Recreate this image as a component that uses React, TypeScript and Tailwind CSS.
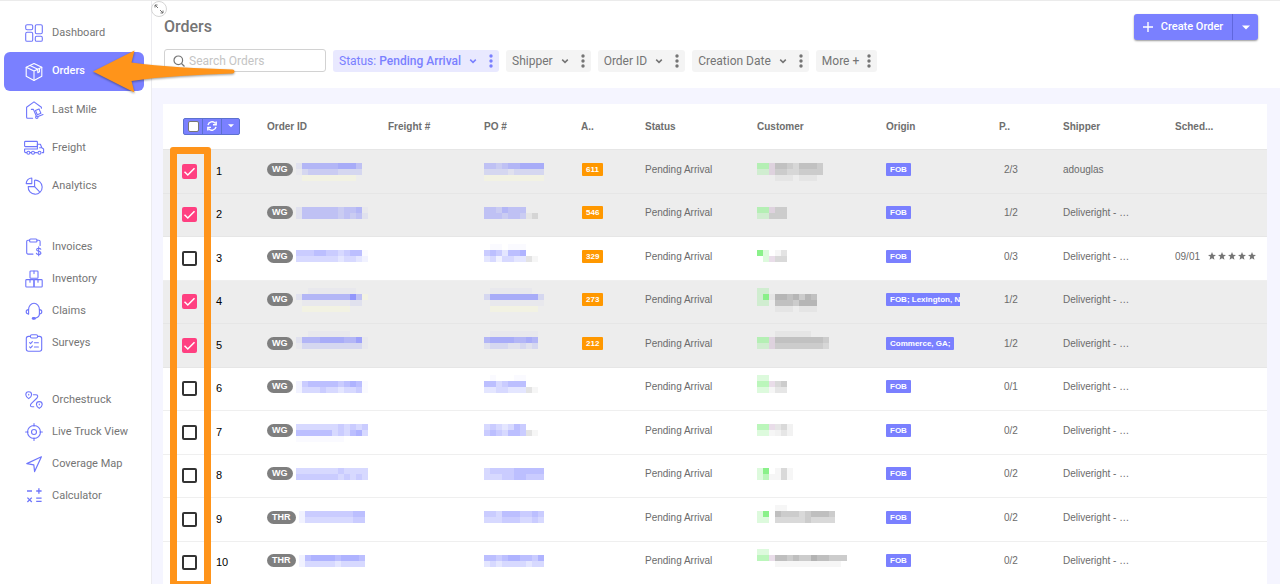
import React from "react";

const svgProps = {
  width: 18,
  height: 18,
  viewBox: "0 0 18 18",
  fill: "none",
  stroke: "currentColor",
  strokeWidth: 1.1,
  strokeLinecap: "round" as const,
  strokeLinejoin: "round" as const,
  overflow: "visible",
  "aria-hidden": true,
};

const icons: Record<string, React.ReactNode> = {
  Dashboard: (
    <>
      <rect x="0.7" y="0.7" width="7" height="5" rx="1.4" />
      <rect x="10.3" y="0.7" width="7" height="9" rx="1.4" />
      <rect x="0.7" y="8.3" width="7" height="9" rx="1.4" />
      <rect x="10.3" y="12.3" width="7" height="5" rx="1.4" />
    </>
  ),
  Orders: (
    <>
      <path d="M9 0.6 16.8 4.2v9L9 17.4 1.2 13.2v-9Z" />
      <path d="M1.2 4.2 9 8l7.8-3.8M9 8v9.4M5 2.6l7.8 3.7v3.4l1.7-1V5.4" />
    </>
  ),
  "Last Mile": (
    <>
      <path d="M7.6 17.2H2.6a1 1 0 0 1-1-1V6.2L9 .9l7.4 5.3v1" />
      <path d="M6.400 8.400h2l3 6.800M13 15.600l5-2" />
      <path d="m10.400 9.400 3.600-1.500 1.900 4.300-3.600 1.500Z" />
      <circle cx="11.800" cy="16.200" r="1.200" />
    </>
  ),
  Freight: (
    <>
      <rect x="-.4" y="2.400" width="12.800" height="5.200" rx=".8" />
      <path d="M-.4 10h12.400M-.4 10v2.600a1 1 0 0 0 1 1h1M12.400 5.200h3l1.400 3.600 1.800 1.200v3.600h-1.400M12.400 5.200V10M14.600 8.800h2.200M5.200 13.600h1.200M9.600 13.600h2.800" />
      <circle cx="3.400" cy="13.800" r="1.500" />
      <circle cx="8" cy="13.800" r="1.500" />
      <circle cx="14.500" cy="13.800" r="1.500" />
    </>
  ),
  Analytics: (
    <>
      <path d="M6.800 1v5.600H1.200A5.600 5.600 0 0 1 6.800 1Z" />
      <path d="M9.600 3.200a7 7 0 1 1-6.400 6.400h6.400Z" />
      <path d="m9.600 9.600 4.800 5" />
    </>
  ),
  Invoices: (
    <>
      <path d="M4.6 2.2H3a1.3 1.3 0 0 0-1.3 1.3v11.3A1.3 1.3 0 0 0 3 16.1h5M12 2.2h1.8a1.3 1.3 0 0 1 1.3 1.3v4" />
      <rect x="4.6" y="1" width="7.4" height="3" rx="1" />
      <path d="M15.8 11.2c-.4-.8-1.2-1-2.2-1-1.200 0-2 .5-2 1.500 0 2.200 4.300 1 4.300 3.200 0 1-1 1.500-2.200 1.500-1.200 0-2-.4-2.300-1.200M13.700 8.700v9" />
    </>
  ),
  Inventory: (
    <>
      <rect x="5" y="1" width="8" height="7.300" rx=".8" />
      <rect x=".8" y="9.600" width="8.200" height="7.400" rx=".8" />
      <rect x="9" y="9.600" width="8.200" height="7.400" rx=".8" />
      <path d="M9 1v2.600M5 9.600v2.600M13 9.600v2.600" />
    </>
  ),
  Claims: (
    <>
      <path d="M3.600 12V7.400a5.400 6.200 0 0 1 10.800 0V12c0 2-1.800 3.600-4.200 4.200" />
      <path d="M3.600 7.600C2 7.600 1.200 8.600 1.200 9.700S2 11.900 3.600 12M14.400 7.600c1.600 0 2.400 1 2.400 2.100s-.8 2.200-2.400 2.300" />
      <ellipse cx="8.800" cy="16.400" rx="1.600" ry=".8" fill="currentColor" />
    </>
  ),
  Surveys: (
    <>
      <rect x="1.300" y="2.400" width="15.400" height="14.800" rx="2.200" />
      <rect x="5.400" y=".8" width="7.200" height="3.200" rx="1.400" fill="white" />
      <path d="m4.600 8.600 1 1 1.800-2M9.400 8.800h4M4.600 12.800l1 1 1.800-2M9.400 13h4" />
    </>
  ),
  Orchestruck: (
    <>
      <path d="M3.700 7.600C2 6.400.8 5.200.8 3.700a2.900 2.900 0 0 1 5.800 0c0 1.500-1.200 2.700-2.900 3.900Z" />
      <path d="M14.300 17.400c-1.700-1.200-2.900-2.400-2.900-3.900a2.900 2.900 0 0 1 5.800 0c0 1.500-1.200 2.700-2.900 3.900Z" />
      <path d="M3.700 3.200v.8M14.300 13v.8M8.400 3.800h2.400c2.200 0 2.400 1.800 1.200 3.200l-5.800 5.600c-1.400 1.600-.8 3.200 1 3.200h1.600" />
    </>
  ),
  "Live Truck View": (
    <>
      <circle cx="9" cy="9" r="6.500" />
      <circle cx="9" cy="9" r="2.500" />
      <path d="M9 .6v2.600M9 14.800v2.600M.6 9h2.600M14.800 9h2.600" />
    </>
  ),
  "Coverage Map": <path d="M16.400 1.800 1.800 8.600l7 1.200.8 6.800Z" strokeWidth="1.200" />,
  Calculator: (
    <path d="M2 4h5M11.200 4h5.400M13.900 1.300v5.400M2.400 10.600l4.400 4.400M6.800 10.600 2.400 15M11.200 11.200h5.400M11.200 14.400h5.400" strokeWidth="1.300" strokeLinecap="butt" />
  ),
};

const groups = [
  { names: ["Dashboard", "Orders", "Last Mile", "Freight", "Analytics"], row: "h-[38px]" },
  { names: ["Invoices", "Inventory", "Claims", "Surveys"], row: "h-8" },
  { names: ["Orchestruck", "Live Truck View", "Coverage Map", "Calculator"], row: "h-8" },
];

function Sidebar() {
  return (
    <nav className="flex w-[152px] shrink-0 flex-col gap-[25px] border-r border-[#ececf0] bg-white pt-[13px] pr-[7px] pl-1">
      {groups.map((g) => (
        <ul key={g.names[0]} className="first:pb-px">
          {g.names.map((n) => (
            <li key={n}>
              <a
                href="#"
                className={`flex items-center gap-[9px] pl-[21px] text-[11px] ${
                  n === "Orders"
                    ? "h-[39px] rounded-md bg-[#7a80ff] font-medium text-white"
                    : `${g.row} text-[#757575]`
                }`}
              >
                <svg {...svgProps} className={n === "Orders" ? "shrink-0" : "shrink-0 text-[#6f76fb]"}>
                  {icons[n]}
                </svg>
                {n}
              </a>
            </li>
          ))}
        </ul>
      ))}
    </nav>
  );
}

function Chevron() {
  return (
    <svg width="8" height="8" viewBox="0 0 8 8" fill="none" stroke="currentColor" strokeWidth="1.500" aria-hidden="true">
      <path d="M1.200 2.600 4 5.400l2.800-2.800" />
    </svg>
  );
}

function Dots() {
  return (
    <svg width="4" height="14" viewBox="0 0 4 14" fill="currentColor" aria-hidden="true">
      <circle cx="2" cy="2" r="1.700" />
      <circle cx="2" cy="7" r="1.700" />
      <circle cx="2" cy="12" r="1.700" />
    </svg>
  );
}

function Caret() {
  return (
    <svg width="8" height="5" viewBox="0 0 8 5" fill="currentColor" aria-hidden="true">
      <path d="M0 .5h8l-4 4Z" />
    </svg>
  );
}

function Filter({ label, value, chevron = true }: { label: string; value?: string; chevron?: boolean }) {
  return (
    <div
      className={`flex h-[22px] items-center rounded-[3px] px-1.5 ${
        value ? "bg-[#e9e9ff] text-[#7a80ff]" : "bg-[#f4f4f4] text-[#757575]"
      }`}
    >
      <button type="button" className="flex items-center gap-2 text-xs">
        <span>
          {label}
          {value && <span className="font-medium"> {value}</span>}
        </span>
        {chevron && <Chevron />}
      </button>
      <button type="button" aria-label={`${label} options`} className={chevron ? "ml-3" : "ml-2"}>
        <Dots />
      </button>
    </div>
  );
}

/* Censored value: one character per 6px cell. Digits are strengths of the base tint. */
function Mosaic({ rows, base }: { rows: string[]; base: string }) {
  const w = Math.max(...rows.map((r) => r.length)) * 6;
  const h = rows.length * 6;
  return (
    <svg width={w} height={h} shapeRendering="crispEdges" className="shrink-0" aria-hidden="true">
      {rows.flatMap((r, y) =>
        [...r].map((c, x) => {
          if (c === " " || c === "0") return null;
          const tint: Record<string, [string, number]> = {
            g: ["#8df08d", 0.3],
            G: ["#8df08d", 0.6],
            H: ["#7df07d", 0.9],
            p: ["#c9a9c9", 0.4],
            k: ["#909090", 0.25],
            j: ["#909090", 0.08],
            f: [base, 0.04],
            y: ["#f5f5dc", 0.6],
          };
          const [fill, op] = tint[c] ?? [base, Number(c) / 10];
          return <rect key={`${x}-${y}`} x={x * 6} y={y * 6} width="6" height="6" fill={fill} fillOpacity={op} />;
        }),
      )}
    </svg>
  );
}

type Order = {
  kind: string;
  id: string[];
  po: string[];
  age?: string;
  who: string[];
  origin: string;
  pieces: string;
  shipper: string;
  sched?: string;
  on?: boolean;
};

const D = "Deliveright - …";
const orders: Order[] = [
  { kind: "WG", id: ["", "15555556664", "f2333332222", "0yyyyyyyyy"], po: ["", "4434556666", "2222122222", "yyyyyyyyyy"], age: "611", who: ["", "GGp44324443", "ggp33223333", "000jjj0jjj"], origin: "FOB", pieces: "2/3", shipper: "adouglas", on: true },
  { kind: "WG", id: ["", "14444443445f", "144444434341", ""], po: ["", "4435444", "4443443jk", ""], age: "546", who: ["", "GGp33", "gg333", ""], origin: "FOB", pieces: "1/2", shipper: D, on: true },
  { kind: "WG", id: ["", "44455443455f", "333333323321", ""], po: ["0ff0fff", "4542556", "2313322kj", ""], age: "329", who: ["", "Hg0jk", "0gp33", ""], origin: "FOB", pieces: "0/3", shipper: D, sched: "09/01" },
  { kind: "WG", id: ["00ffffffff", "15555555584y", "0ffffffff11", "0yyyyyyyy"], po: ["0fffffff", "2666666662", "0fffffffff", "0yyyyyyyy"], age: "273", who: ["gg", "gHj5545354", "gg04443555", "000jjj0jjj"], origin: "FOB; Lexington, NC", pieces: "1/2", shipper: D, on: true },
  { kind: "WG", id: ["00fffffff", "15556666557f", "f2222222222f", ""], po: ["0ffffffff", "566665565", "122211212", ""], age: "212", who: ["000jjjjjj", "GGp444444443", "ggp333333332", ""], origin: "Commerce, GA;", pieces: "1/2", shipper: D, on: true },
  { kind: "WG", id: ["", "14555554565f", "13334332334f", ""], po: ["0f000ff", "5534555", "2233222kj", ""], who: ["gg", "GGp34", "ggj22", ""], origin: "FOB", pieces: "0/1", shipper: D },
  { kind: "WG", id: ["", "333333343434", "555555343563", "ffffffff"], po: ["", "3432354", "4543554kj", ""], who: ["", "GGp231", "ggj121", ""], origin: "FOB", pieces: "0/2", shipper: D },
  { kind: "WG", id: ["", "333333343333", "444444434343", ""], po: ["", "3444455555", "3334455444", ""], who: ["", "gH0j3j", "gGjj3j", ""], origin: "FOB", pieces: "0/2", shipper: D },
  { kind: "THR", id: ["", "14444444455", "13333333344", ""], po: ["", "4435554454", "3334443343", ""], who: ["000jj", "gH05444345554", "gg03333343333", ""], origin: "FOB", pieces: "0/2", shipper: D },
  { kind: "THR", id: ["", "15666656665", "13333323333", ""], po: ["", "5545665546", "2323333233", ""], who: ["gg", "GGp554544655444", "000jjjjjjjjjjj", ""], origin: "FOB", pieces: "0/2", shipper: D },
];

function RowCheckbox({ index, on }: { index: number; on?: boolean }) {
  return (
    <label className="grid size-[15px] place-items-center">
      <input
        type="checkbox"
        defaultChecked={on}
        aria-label={`Select order ${index}`}
        className="peer size-[15px] appearance-none rounded-[2px] border-2 border-[#333] [grid-area:1/1] checked:border-[#ff4081] checked:bg-[#ff4081]"
      />
      <svg
        width="13"
        height="13"
        viewBox="0 0 13 13"
        fill="none"
        stroke="white"
        strokeWidth="1.500"
        className="pointer-events-none hidden [grid-area:1/1] peer-checked:block"
        aria-hidden="true"
      >
        <path d="m1.500 6.800 3.300 3.200 6.700-6.800" />
      </svg>
    </label>
  );
}

function Stars() {
  return (
    <span className="flex gap-0.5" role="img" aria-label="5 stars">
      {[0, 1, 2, 3, 4].map((i) => (
        <svg key={i} width="8" height="8" viewBox="0 0 24 24" fill="#757575" aria-hidden="true">
          <path d="m12 0 3.200 8.400 8.800.5-6.900 5.600 2.300 8.700L12 18.400l-7.400 4.800 2.300-8.700L0 8.900l8.800-.5Z" />
        </svg>
      ))}
    </span>
  );
}

const tag = "inline-block h-[13px] rounded-[1px] px-1 text-[8px] leading-[13px] font-bold whitespace-nowrap text-white";

export default function App() {
  return (
    <div className="flex h-screen overflow-hidden border-t border-[#ebebeb] bg-[#f5f5ff] font-['Roboto',sans-serif]">
      <div className="relative flex">
        <Sidebar />
        <button
          type="button"
          aria-label="Toggle sidebar"
          className="absolute top-0 -right-[15px] z-10 flex size-4 items-center justify-center rounded-full border border-[#d5d5d5] bg-white text-[#666]"
        >
          <svg width="10" height="10" viewBox="0 0 10 10" fill="none" stroke="currentColor" strokeWidth=".9" aria-hidden="true">
            <path d="M1 3.500V1h2.500M1 1l3 3M9 6.500V9H6.500M9 9 6 6" />
          </svg>
        </button>
        <svg
          width="150"
          height="48"
          viewBox="0 0 150 48"
          className="pointer-events-none absolute top-[47px] left-[90px] z-20 drop-shadow-[0_1px_1px_rgba(0,0,0,0.4)]"
          aria-hidden="true"
        >
          <path
            d="M3 23.500 44.500 2.500 41.500 14.500C70 18.500 110 20.500 142.500 21.500a2 2 0 0 1 0 4C110 26.500 70 28.500 41.500 33l3 11.500Z"
            fill="#ff941a"
          />
        </svg>
      </div>

      <main className="flex min-w-0 flex-1 flex-col">
        <header className="flex h-[87px] shrink-0 flex-col bg-white pr-[22px] pl-3">
          <div className="flex h-12 items-start justify-between">
            <h1 className="mt-3.5 text-base leading-6 font-medium text-[#757575]">Orders</h1>
            <div className="mt-[13px] flex h-[26px] rounded-[3px] bg-[#7a80ff] text-white shadow-[0_1px_2px_rgba(0,0,0,0.4)]">
              <button type="button" className="flex w-[98px] items-center justify-center gap-2 text-[11px] font-medium whitespace-nowrap">
                <svg width="10" height="10" viewBox="0 0 10 10" stroke="currentColor" strokeWidth="1.400" aria-hidden="true">
                  <path d="M5 0v10M0 5h10" />
                </svg>
                Create Order
              </button>
              <button
                type="button"
                aria-label="More create options"
                className="flex w-[26px] items-center justify-center border-l border-[#6067dd]"
              >
                <Caret />
              </button>
            </div>
          </div>
          <div className="flex items-center gap-[7px]">
            <label className="flex h-[23px] w-[162px] items-center gap-1 rounded-[3px] border border-[#d2d2d2] pl-2 text-[#757575]">
              <svg width="12" height="12" viewBox="0 0 12 12" fill="none" stroke="currentColor" strokeWidth="1.200" aria-hidden="true">
                <circle cx="5.300" cy="5.300" r="4.300" />
                <path d="m8.500 8.500 3 3" />
              </svg>
              <input
                type="text"
                aria-label="Search Orders"
                placeholder="Search Orders"
                className="min-w-0 flex-1 bg-transparent text-xs outline-none placeholder:text-[#c4c4c4]"
              />
            </label>
            <Filter label="Status:" value="Pending Arrival" />
            <Filter label="Shipper" />
            <Filter label="Order ID" />
            <Filter label="Creation Date" />
            <Filter label="More +" chevron={false} />
          </div>
        </header>

        <section className="relative mt-4 mr-[13px] ml-[11px] shrink-0 bg-white">
          <table className="w-full table-fixed border-collapse text-left font-['Liberation_Sans',Arial,sans-serif] text-[10px] text-[#6b6b6b]">
            <colgroup>
              <col className="w-[53px]" />
              <col className="w-[51px]" />
              <col className="w-[121px]" />
              <col className="w-24" />
              <col className="w-[97px]" />
              <col className="w-16" />
              <col className="w-28" />
              <col className="w-[129px]" />
              <col className="w-[113px]" />
              <col className="w-16" />
              <col className="w-28" />
              <col />
            </colgroup>
            <thead>
              <tr className="h-[45px] border-b border-[#e6e6e6]">
                <th colSpan={2} className="p-0 pl-5">
                  <div className="flex h-[17px] w-[57px] rounded-[2px] border border-[#5c71cf] bg-[#7a80ff] text-white">
                    <label className="flex w-[18px] items-center justify-center">
                      <input
                        type="checkbox"
                        aria-label="Select all orders"
                        className="size-[11px] appearance-none rounded-[2px] border border-[#767676] bg-white"
                      />
                    </label>
                    <button type="button" aria-label="Refresh" className="flex w-[19px] items-center justify-center border-l border-[#5c71cf]">
                      <svg width="10" height="10" viewBox="0 0 12 12" fill="none" stroke="currentColor" strokeWidth="1.700" aria-hidden="true">
                        <path d="M1.200 5A5 5 0 0 1 10 2.800M11 .6v3.800H7.200M10.800 7A5 5 0 0 1 2 9.200M1 11.400V7.600h3.800" />
                      </svg>
                    </button>
                    <button type="button" aria-label="Selection options" className="flex flex-1 items-center justify-center border-l border-[#5c71cf]">
                      <svg width="6" height="4" viewBox="0 0 6 4" fill="currentColor" aria-hidden="true">
                        <path d="M0 .3h6l-3 3Z" />
                      </svg>
                    </button>
                  </div>
                </th>
                {["Order ID", "Freight #", "PO #", "A..", "Status", "Customer", "Origin", "P..", "Shipper", "Sched..."].map((h) => (
                  <th key={h} className="p-0 font-bold text-[#6e6e6e]">
                    {h}
                  </th>
                ))}
              </tr>
            </thead>
            <tbody>
              {orders.map((o, i) => (
                <tr
                  key={i}
                  className={`border-b odd:h-11 even:h-[43px] [&>td]:p-0 ${
                    o.on ? "border-[#e6e6e6] bg-[#ededed]" : "border-[#efefef] bg-white"
                  }`}
                >
                  <td>
                    <div className="pl-[19px]">
                      <RowCheckbox index={i + 1} on={o.on} />
                    </div>
                  </td>
                  <td className="text-[11px] text-black">{i + 1}</td>
                  <td>
                    <div className="flex items-center gap-[3px] pb-1">
                      <span className="h-[13px] shrink-0 rounded-full bg-[#7f7f7f] px-[5px] text-[9px] leading-[13px] font-bold text-white">
                        {o.kind}
                      </span>
                      <Mosaic rows={o.id} base="#7a80ff" />
                    </div>
                  </td>
                  <td />
                  <td>
                    <div className="pb-1">
                      <Mosaic rows={o.po} base="#7a80ff" />
                    </div>
                  </td>
                  <td>
                    <div className="flex pb-1 pl-px">{o.age && <span className={`${tag} bg-[#ff9800]`}>{o.age}</span>}</div>
                  </td>
                  <td>
                    <div className="pb-1">Pending Arrival</div>
                  </td>
                  <td>
                    <div className="pb-1">
                      <Mosaic rows={o.who} base="#808080" />
                    </div>
                  </td>
                  <td>
                    <div className="flex pb-1">
                      <div className="flex max-w-[74px] overflow-hidden">
                        <span className={`${tag} bg-[#7a80ff]`}>{o.origin}</span>
                      </div>
                    </div>
                  </td>
                  <td>
                    <div className="pb-1 pl-[5px]">{o.pieces}</div>
                  </td>
                  <td>
                    <div className="truncate pb-1">{o.shipper}</div>
                  </td>
                  <td>
                    {o.sched && (
                      <div className="flex items-center gap-2 pb-1">
                        {o.sched}
                        <Stars />
                      </div>
                    )}
                  </td>
                </tr>
              ))}
            </tbody>
          </table>
          <div className="pointer-events-none absolute top-[43px] -bottom-[3px] left-[7px] w-[41px] rounded-[3px] border-[7px] border-[#ff941a]" />
        </section>
      </main>
    </div>
  );
}
